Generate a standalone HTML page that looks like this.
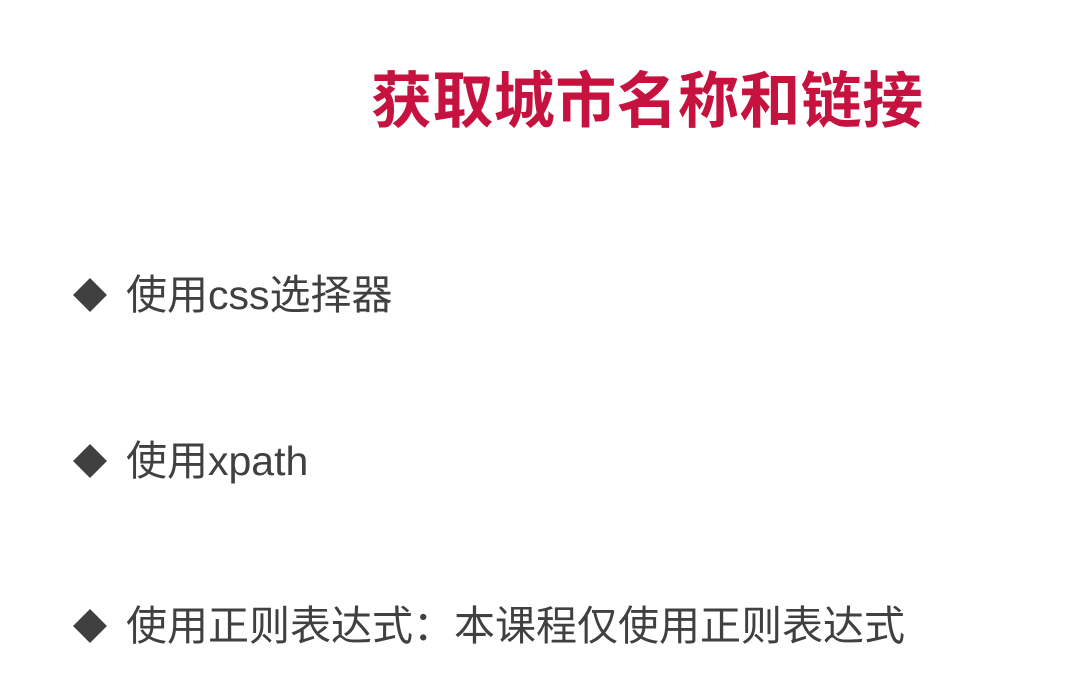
<!DOCTYPE html>
<html><head><meta charset="utf-8"><style>
html,body{margin:0;padding:0;background:#fff;width:1082px;height:687px;overflow:hidden;position:relative}
.t{position:absolute;left:371px;top:51px;font:bold 61px "Liberation Sans","Noto Sans CJK SC",sans-serif;color:#c5123f;white-space:nowrap;letter-spacing:0.4px}
.b{position:absolute;left:126px;font:41px "Liberation Sans","Noto Sans CJK SC",sans-serif;color:#404040;white-space:nowrap;line-height:1}
.d{position:absolute;left:78px;width:24px;height:24px;background:#404040;transform:rotate(45deg)}
</style></head><body>
<div class="t">获取城市名称和链接</div>
<div class="d" style="top:283px"></div>
<div class="b" style="top:275px">使用css选择器</div>
<div class="d" style="top:449px"></div>
<div class="b" style="top:441px">使用xpath</div>
<div class="d" style="top:614px"></div>
<div class="b" style="top:606px">使用正则表达式：本课程仅使用正则表达式</div>
</body></html>
